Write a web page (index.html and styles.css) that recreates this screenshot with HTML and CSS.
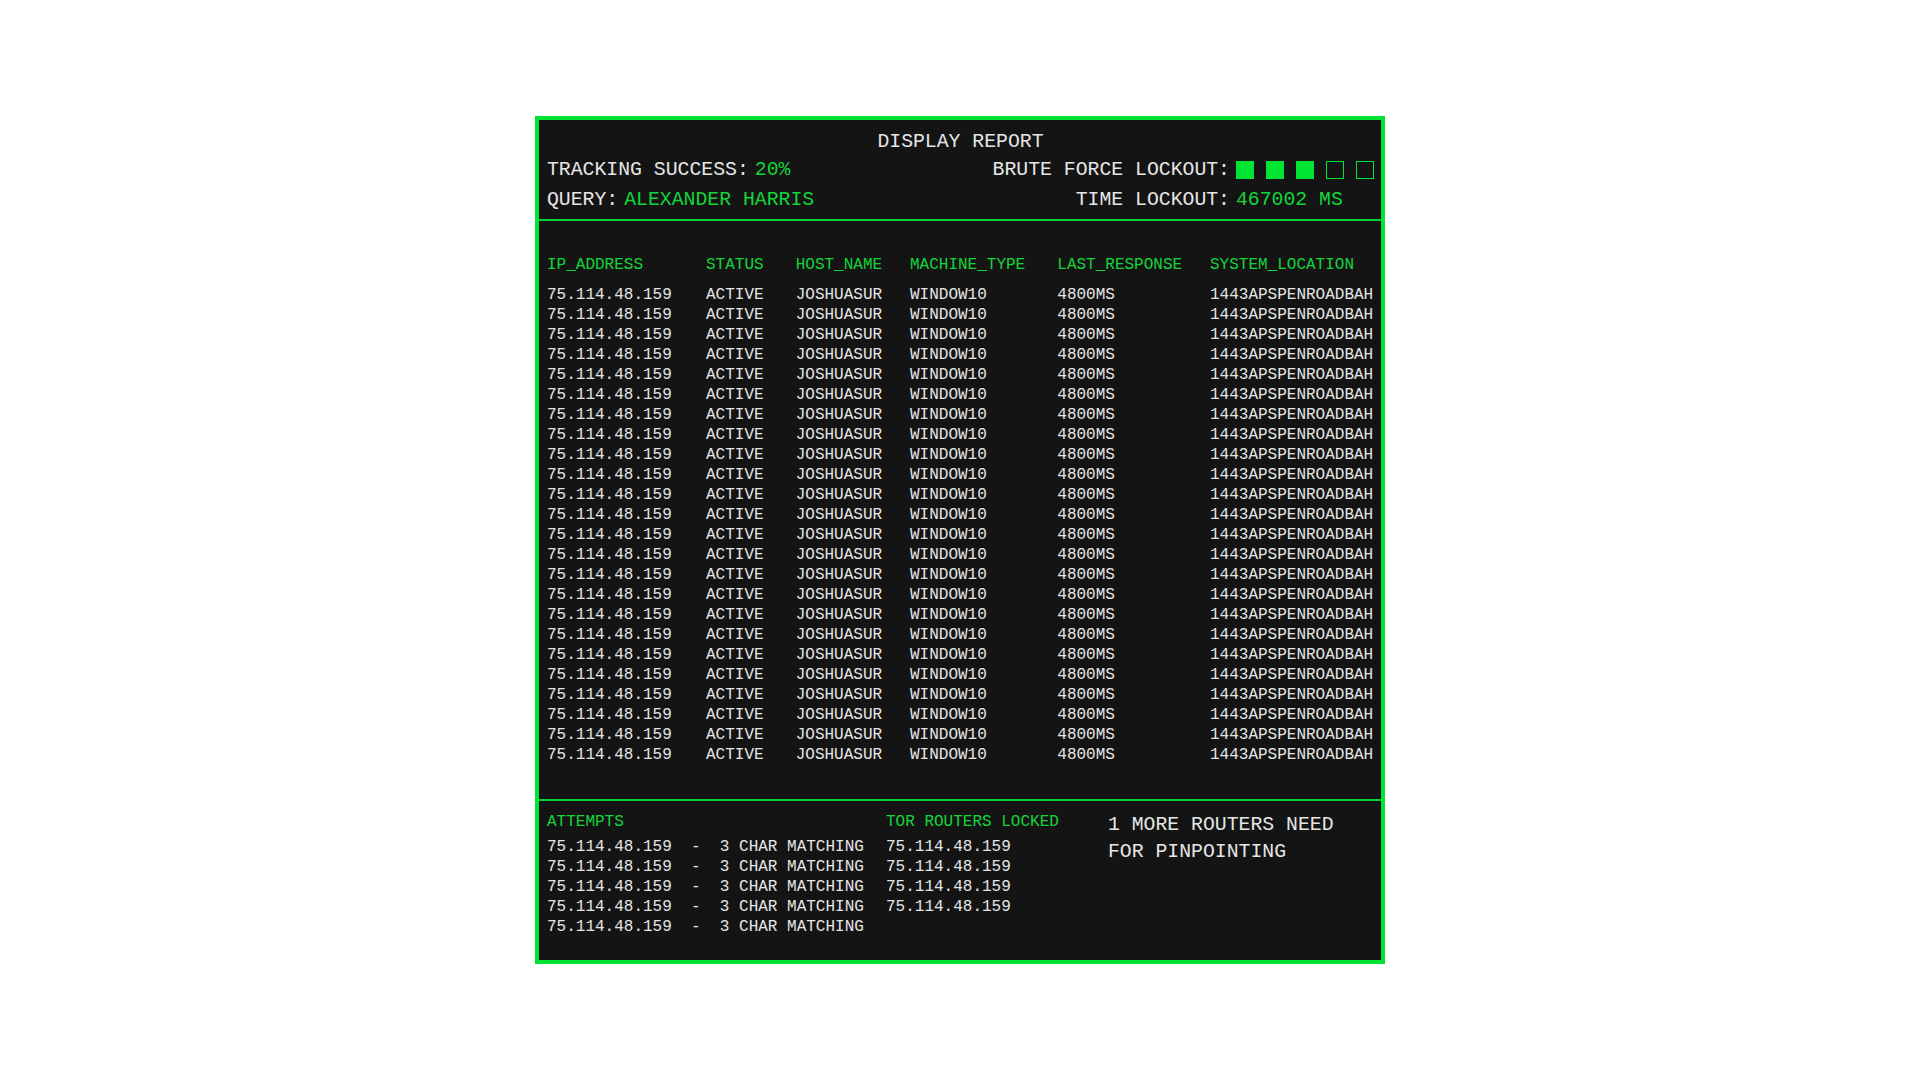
FILE: index.html
```html
<!DOCTYPE html>
<html lang="en">
<head>
<meta charset="utf-8">
<title>Display Report</title>
<link rel="stylesheet" href="styles.css">
</head>
<body>
<div class="stage">
  <section class="panel">
    <header class="report-head">
      <div class="title">DISPLAY REPORT</div>
      <div class="head-grid">
        <div class="pair"><span class="label">TRACKING SUCCESS:</span><span class="value">20%</span></div>
        <div class="rlabel">BRUTE FORCE LOCKOUT:</div>
        <div class="boxes">
          <span class="box on"></span><span class="box on"></span><span class="box on"></span><span class="box"></span><span class="box"></span>
        </div>
        <div class="pair"><span class="label">QUERY:</span><span class="value">ALEXANDER HARRIS</span></div>
        <div class="rlabel">TIME LOCKOUT:</div>
        <div class="value">467002 MS</div>
      </div>
    </header>

    <div class="table-wrap">
      <div class="grid-table head">
        <span>IP_ADDRESS</span><span>STATUS</span><span>HOST_NAME</span><span>MACHINE_TYPE</span><span>LAST_RESPONSE</span><span>SYSTEM_LOCATION</span>
      </div>
      <div class="rows" id="rows"></div>
    </div>

    <footer class="bottom">
      <div class="col">
        <div class="col-head">ATTEMPTS</div>
        <div class="line">75.114.48.159  -  3 CHAR MATCHING</div>
        <div class="line">75.114.48.159  -  3 CHAR MATCHING</div>
        <div class="line">75.114.48.159  -  3 CHAR MATCHING</div>
        <div class="line">75.114.48.159  -  3 CHAR MATCHING</div>
        <div class="line">75.114.48.159  -  3 CHAR MATCHING</div>
      </div>
      <div class="col">
        <div class="col-head">TOR ROUTERS LOCKED</div>
        <div class="line">75.114.48.159</div>
        <div class="line">75.114.48.159</div>
        <div class="line">75.114.48.159</div>
        <div class="line">75.114.48.159</div>
      </div>
      <div class="note">1 MORE ROUTERS NEED FOR PINPOINTING</div>
    </footer>
  </section>
</div>
<script src="script.js"></script>
</body>
</html>
```

FILE: script.js
```js
(function () {
  var rows = document.getElementById('rows');
  var cells = ['75.114.48.159', 'ACTIVE', 'JOSHUASUR', 'WINDOW10', '4800MS', '1443APSPENROADBAH'];
  var html = '';
  for (var i = 0; i < 24; i++) {
    html += '<div class="grid-table">';
    for (var j = 0; j < cells.length; j++) {
      html += '<span>' + cells[j] + '</span>';
    }
    html += '</div>';
  }
  rows.innerHTML = html;
})();
```

FILE: styles.css
```css
html, body {
  margin: 0;
  padding: 0;
  background: #ffffff;
}

.stage {
  width: 1920px;
  height: 1080px;
  display: flex;
  align-items: center;
  justify-content: center;
}

.panel {
  width: 850px;
  box-sizing: border-box;
  background: #141414;
  border: 4px solid #00e533;
  font-family: "Liberation Mono", "DejaVu Sans Mono", monospace;
  color: #e6e6e6;
}

.report-head {
  padding: 8px 7px 5px 8px;
  border-bottom: 2px solid #00d22e;
  font-size: 19.8px;
  line-height: 28px;
}

.title {
  text-align: center;
}

.head-grid {
  display: grid;
  grid-template-columns: 1fr auto auto;
  column-gap: 6px;
  row-gap: 2px;
  align-items: center;
}

.pair {
  display: flex;
  gap: 6px;
}

.rlabel {
  text-align: right;
}

.value {
  color: #14d43a;
}

.boxes {
  display: flex;
  gap: 12px;
}

.box {
  width: 18px;
  height: 18px;
  box-sizing: border-box;
  border: 1px solid #00e533;
}

.box.on {
  background: #00e533;
}

.table-wrap {
  padding: 34px 8px 34px 8px;
  border-bottom: 2px solid #00d22e;
  font-size: 16px;
  line-height: 20px;
}

.grid-table {
  display: grid;
  grid-template-columns: 159px 89.7px 114.3px 147.3px 152.7px auto;
  white-space: nowrap;
}

.grid-table.head {
  color: #14d43a;
  margin-bottom: 10px;
}

.bottom {
  display: grid;
  grid-template-columns: 339px 222px 1fr;
  padding: 11px 8px 23px 8px;
  font-size: 16px;
  line-height: 20px;
}

.col-head {
  color: #14d43a;
  margin-bottom: 5px;
}

.line {
  white-space: pre;
}

.note {
  font-size: 19.8px;
  line-height: 27px;
}
```
